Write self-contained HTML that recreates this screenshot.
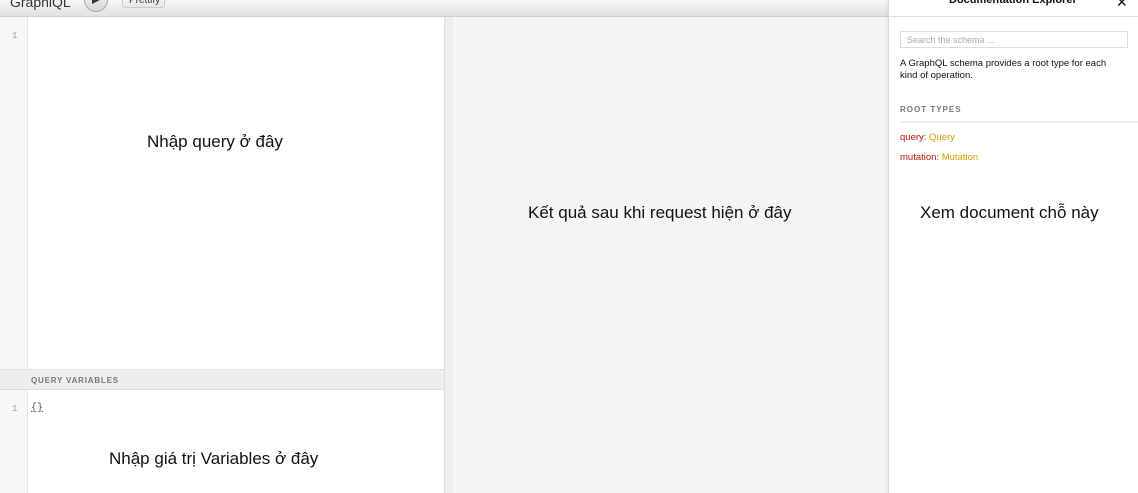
<!DOCTYPE html>
<html><head><meta charset="utf-8"><style>
*{margin:0;padding:0;box-sizing:border-box}
body{width:1138px;height:493px;overflow:hidden;font-family:"Liberation Sans",sans-serif;background:#fff;position:relative}
.abs{position:absolute}
.top{left:0;top:0;width:888px;height:17px;background:linear-gradient(#f7f7f7,#e2e2e2);border-bottom:1px solid #d0d0d0}
.gutter{left:0;top:17px;width:28px;height:476px;background:#f7f7f7;border-right:1px solid #e6e6e6}
.ln{font-family:"Liberation Mono",monospace;font-size:9px;color:#999;left:12px}
.div{left:444px;top:17px;width:9px;height:476px;background:#eeeeee;border-left:1px solid #e0e0e0}
.res{left:453px;top:17px;width:435px;height:476px;background:#f5f5f5}
.doc{left:888px;top:0;width:250px;height:493px;background:#fff;border-left:1px solid #d6d6d6;box-shadow:-1px 0 3px rgba(0,0,0,.08)}
.big{font-size:17px;color:#111}
</style></head><body>
<div class="abs top"></div>
<div class="abs" style="left:10px;top:-6px;font-size:14px;color:#333">GraphiQL</div>
<div class="abs" style="left:84px;top:-12px;width:24px;height:24px;border-radius:50%;background:linear-gradient(#fdfdfd,#d2d3d6);border:1px solid #aaa"></div>
<svg class="abs" style="left:91px;top:-3px" width="10" height="10"><path d="M1 0 L9 3 L1 7Z" fill="#333"/></svg>
<div class="abs" style="left:122px;top:-5px;width:43px;height:13px;background:linear-gradient(#fbfbfb,#e6e6e6);border:1px solid #ccc;border-radius:3px;font-size:10px;color:#333;padding-left:6px;line-height:10px">Prettify</div>
<div class="abs gutter"></div>
<div class="abs ln" style="top:31px">1</div>
<div class="abs big" style="left:147px;top:132px">Nhập query ở đây</div>
<div class="abs" style="left:0;top:369px;width:444px;height:21px;background:#eeeeee;border-top:1px solid #e0e0e0;border-bottom:1px solid #ddd;font-size:8px;font-weight:bold;color:#777;letter-spacing:.8px;padding:6px 0 0 31px">QUERY VARIABLES</div>
<div class="abs ln" style="top:404px">1</div>
<div class="abs" style="left:31px;top:403px;font-family:'Liberation Mono',monospace;font-size:10px;color:#555;text-decoration:underline">{}</div>
<div class="abs big" style="left:109px;top:449px">Nhập giá trị Variables ở đây</div>
<div class="abs div"></div>
<div class="abs res"></div>
<div class="abs big" style="left:528px;top:203px">Kết quả sau khi request hiện ở đây</div>
<div class="abs doc">
<div class="abs" style="left:0;top:0;width:250px;height:17px;border-bottom:1px solid #ddd"></div>
<div class="abs" style="left:60px;top:-6px;font-size:11px;font-weight:bold;color:#111">Documentation Explorer</div>
<div class="abs" style="left:227px;top:-6px;font-size:14px;color:#111">✕</div>
<div class="abs" style="left:11px;top:31px;width:228px;height:17px;border:1px solid #ddd;font-size:9px;color:#aaa;padding:3px 0 0 6px">Search the schema ...</div>
<div class="abs" style="left:11px;top:58px;width:225px;font-size:9.5px;line-height:12px;color:#111">A GraphQL schema provides a root type for each kind of operation.</div>
<div class="abs" style="left:11px;top:105px;font-size:8px;font-weight:bold;color:#777;letter-spacing:1px">ROOT TYPES</div>
<div class="abs" style="left:11px;top:121px;width:239px;height:2px;background:#eee"></div>
<div class="abs" style="left:11px;top:132px;font-size:9.5px;color:#b11a04">query: <span style="color:#d29b00">Query</span></div>
<div class="abs" style="left:11px;top:152px;font-size:9.5px;color:#b11a04">mutation: <span style="color:#d29b00">Mutation</span></div>
<div class="abs big" style="left:31px;top:203px">Xem document chỗ này</div>
</div>
</body></html>
